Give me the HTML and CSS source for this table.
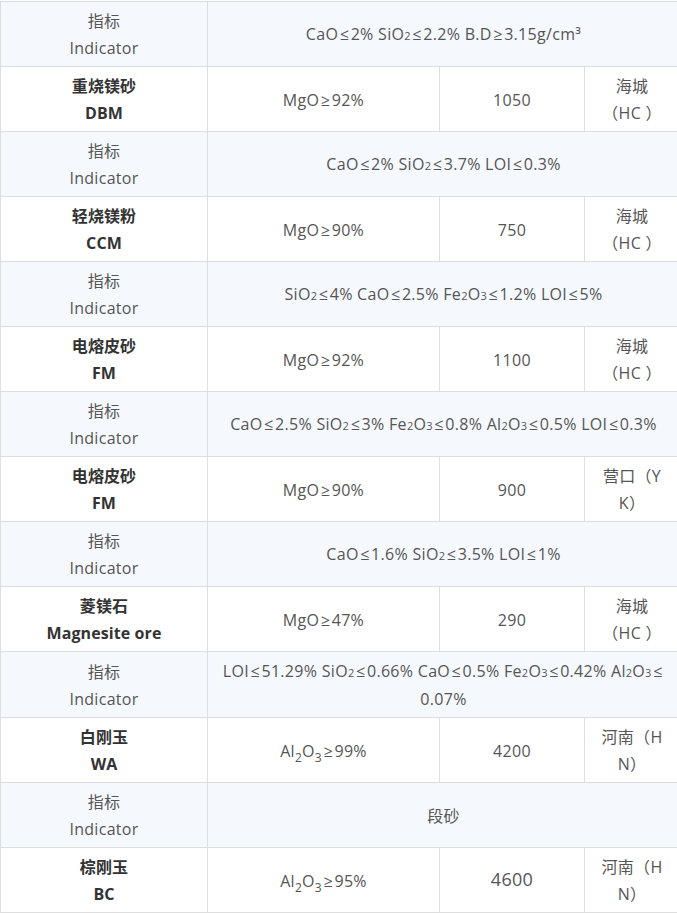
FILE: index.html
```html
<!DOCTYPE html>
<html lang="zh">
<head>
<meta charset="utf-8">
<title>产品指标</title>
<link rel="stylesheet" href="styles.css">
</head>
<body>
<table class="spec">
  <colgroup>
    <col class="c-name">
    <col class="c-grade">
    <col class="c-price">
    <col class="c-origin">
  </colgroup>
  <tbody>
    <tr class="ind">
      <td>指标<br>Indicator</td>
      <td colspan="3">CaO<span class="op">≤</span>2% SiO<span class="s">2</span><span class="op">≤</span>2.2% B.D<span class="op">≥</span>3.15g/cm³</td>
    </tr>
    <tr>
      <td class="name">重烧镁砂<br>DBM</td>
      <td>MgO<span class="op">≥</span>92%</td>
      <td>1050</td>
      <td>海城<br>（HC ）</td>
    </tr>
    <tr class="ind">
      <td>指标<br>Indicator</td>
      <td colspan="3">CaO<span class="op">≤</span>2% SiO<span class="s">2</span><span class="op">≤</span>3.7% LOI<span class="op">≤</span>0.3%</td>
    </tr>
    <tr>
      <td class="name">轻烧镁粉<br>CCM</td>
      <td>MgO<span class="op">≥</span>90%</td>
      <td>750</td>
      <td>海城<br>（HC ）</td>
    </tr>
    <tr class="ind">
      <td>指标<br>Indicator</td>
      <td colspan="3">SiO<span class="s">2</span><span class="op">≤</span>4% CaO<span class="op">≤</span>2.5% Fe<span class="s">2</span>O<span class="s">3</span><span class="op">≤</span>1.2% LOI<span class="op">≤</span>5%</td>
    </tr>
    <tr>
      <td class="name">电熔皮砂<br>FM</td>
      <td>MgO<span class="op">≥</span>92%</td>
      <td>1100</td>
      <td>海城<br>（HC ）</td>
    </tr>
    <tr class="ind">
      <td>指标<br>Indicator</td>
      <td colspan="3">CaO<span class="op">≤</span>2.5% SiO<span class="s">2</span><span class="op">≤</span>3% Fe<span class="s">2</span>O<span class="s">3</span><span class="op">≤</span>0.8% Al<span class="s">2</span>O<span class="s">3</span><span class="op">≤</span>0.5% LOI<span class="op">≤</span>0.3%</td>
    </tr>
    <tr>
      <td class="name">电熔皮砂<br>FM</td>
      <td>MgO<span class="op">≥</span>90%</td>
      <td>900</td>
      <td>营口（Y<br>K）</td>
    </tr>
    <tr class="ind">
      <td>指标<br>Indicator</td>
      <td colspan="3">CaO<span class="op">≤</span>1.6% SiO<span class="s">2</span><span class="op">≤</span>3.5% LOI<span class="op">≤</span>1%</td>
    </tr>
    <tr>
      <td class="name">菱镁石<br>Magnesite ore</td>
      <td>MgO<span class="op">≥</span>47%</td>
      <td>290</td>
      <td>海城<br>（HC ）</td>
    </tr>
    <tr class="ind">
      <td>指标<br>Indicator</td>
      <td colspan="3">LOI<span class="op">≤</span>51.29% SiO<span class="s">2</span><span class="op">≤</span>0.66% CaO<span class="op">≤</span>0.5% Fe<span class="s">2</span>O<span class="s">3</span><span class="op">≤</span>0.42% Al<span class="s">2</span>O<span class="s">3</span><span class="op">≤</span><br>0.07%</td>
    </tr>
    <tr>
      <td class="name">白刚玉<br>WA</td>
      <td>Al<sub>2</sub>O<sub>3</sub><span class="op">≥</span>99%</td>
      <td>4200</td>
      <td>河南（H<br>N）</td>
    </tr>
    <tr class="ind">
      <td>指标<br>Indicator</td>
      <td colspan="3" class="edge">段砂</td>
    </tr>
    <tr>
      <td class="name">棕刚玉<br>BC</td>
      <td>Al<sub>2</sub>O<sub>3</sub><span class="op">≥</span>95%</td>
      <td class="big">4600</td>
      <td>河南（H<br>N）</td>
    </tr>
  </tbody>
</table>
</body>
</html>
```
FILE: styles.css
```css
html, body {
  margin: 0;
  padding: 0;
  background: #ffffff;
}

body {
  font-family: "Open Sans", "Noto Sans CJK SC", sans-serif;
  font-size: 16px;
  color: #555555;
  letter-spacing: 0.3px;
}

.spec {
  border-collapse: collapse;
  table-layout: fixed;
  width: 679px;
  margin-top: 1px;
}

.c-name { width: 207px; }
.c-grade { width: 232px; }
.c-price { width: 145px; }
.c-origin { width: 95px; }

.spec td {
  border: 1px solid #dedede;
  height: 54px;
  padding: 6px 8px 4px;
  text-align: center;
  vertical-align: middle;
  line-height: 27px;
}

.spec tr.ind td {
  background: #f5f8fd;
}

.spec td.name {
  font-weight: 700;
  color: #333333;
  letter-spacing: 0.1px;
}

.op {
  margin: 0 1.5px;
}

.s {
  font-size: 11px;
  vertical-align: baseline;
}

sub {
  font-size: 12px;
  line-height: 0;
  vertical-align: -5px;
}

.spec td.big {
  font-size: 18px;
  padding-top: 4px;
  padding-bottom: 6px;
}

.spec td.edge {
  box-shadow: inset -2px 0 0 #1a1a1a;
}
```
